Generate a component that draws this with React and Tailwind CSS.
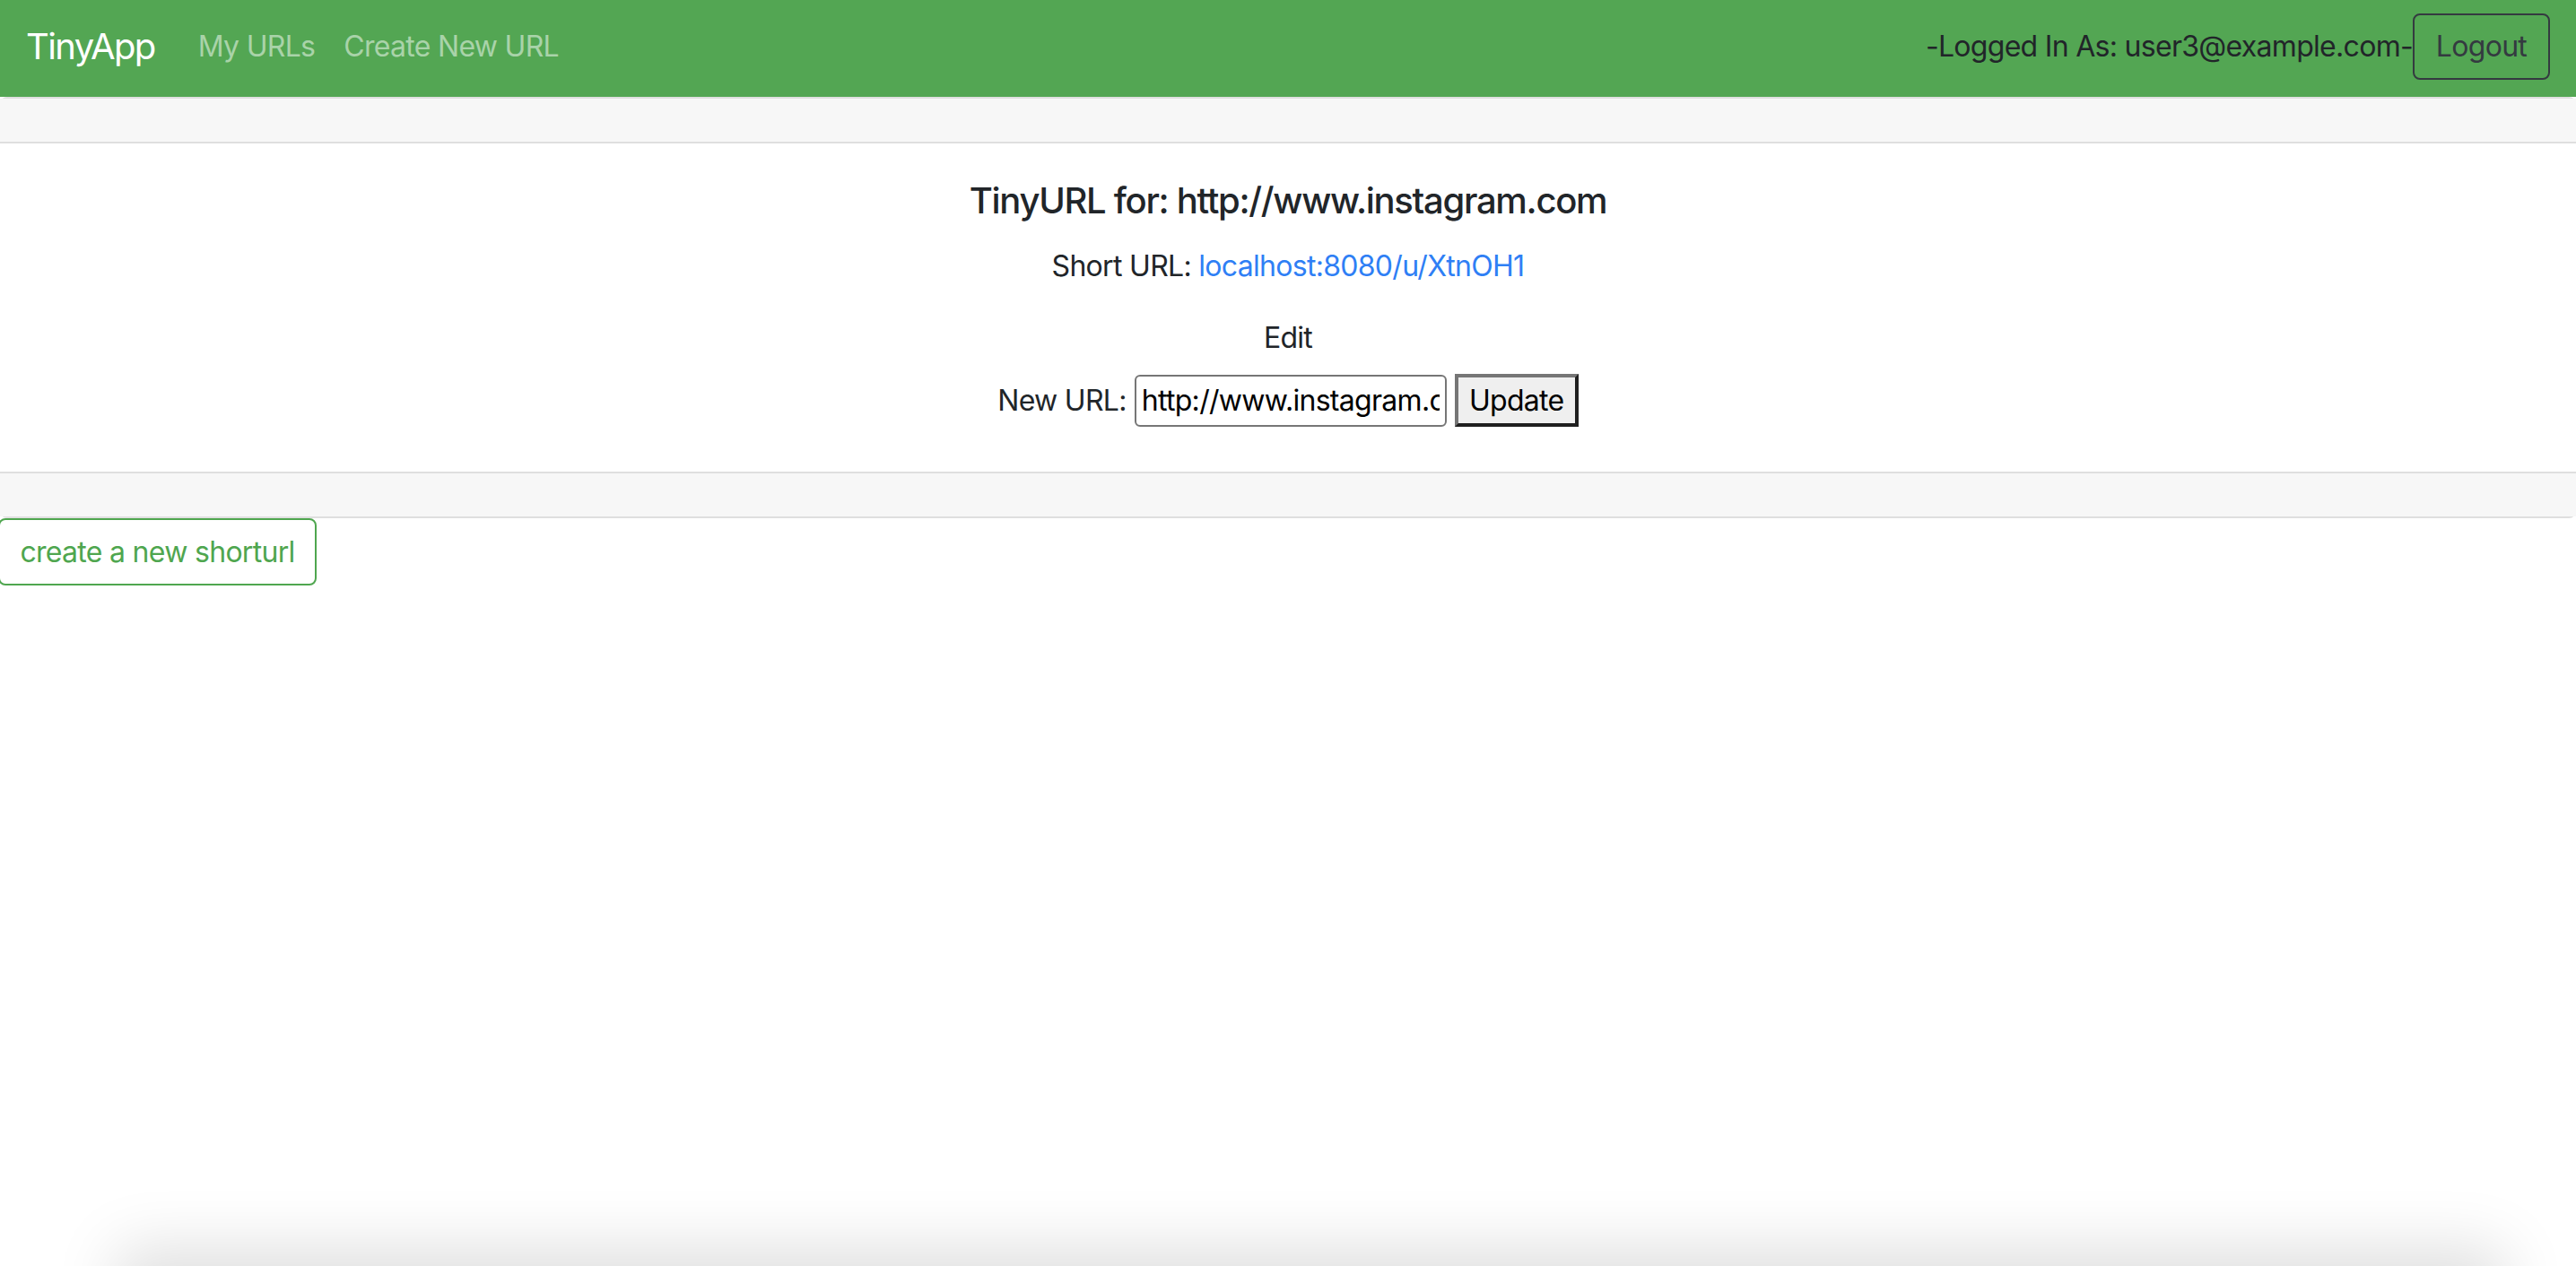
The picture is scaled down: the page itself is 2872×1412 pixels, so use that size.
export default function App() {
  return (
    <div className="min-h-screen bg-white font-['Inter','Liberation_Sans',sans-serif] text-[32px] tracking-[-0.7px] text-[#212529]">
      {/* top nav */}
      <nav className="flex h-[108px] items-center bg-[#53a653] pl-[29px] pr-[29px] pt-[15px] pb-[19px]">
        <a className="mr-[32px] text-[40px] leading-[60px] tracking-[-1.6px] text-white">TinyApp</a>
        <a className="px-[16px] leading-[48px] text-[#a9d3a9]">My URLs</a>
        <a className="px-[16px] leading-[48px] text-[#a9d3a9]">Create New URL</a>
        <div className="ml-auto flex items-center">
          <span className="leading-[48px]">-Logged In As: user3@example.com-</span>
          <button className="flex h-[74px] w-[153px] items-center justify-center rounded-[8px] border-2 border-[#343a40] text-[#343a40]">
            Logout
          </button>
        </div>
      </nav>

      {/* card */}
      <div className="rounded-[8px] border-y-2 border-[#dfdfdf]">
        <div className="h-[50px] border-b-2 border-[#dfdfdf] bg-[#f7f7f7]"></div>
        <div className="flex flex-col items-center pt-[40px] pb-[50px] text-center">
          <h5 className="text-[40px] font-medium leading-[48px] tracking-[-1.3px]">
            TinyURL for: http://www.instagram.com
          </h5>
          <p className="mt-[25px] leading-[48px]">
            Short URL: <a className="text-[#2f7ff5]">localhost:8080/u/XtnOH1</a>
          </p>
          <p className="mt-[32px] leading-[48px]">Edit</p>
          <form className="mt-[16px] flex h-[59px] items-center gap-[9px]">
            <label className="leading-[48px]">New URL:</label>
            <input
              type="text"
              defaultValue="http://www.instagram.com"
              className="h-[58px] w-[348px] rounded-[6px] border-2 border-[#767676] px-[6px] text-[32px] tracking-[-0.7px] text-black outline-none"
            />
            <button
              type="button"
              className="h-[59px] w-[138px] border-[4px] border-t-[#767676] border-l-[#767676] border-r-[#1f1f1f] border-b-[#1f1f1f] bg-[#efefef] text-[32px] text-black"
            >
              Update
            </button>
          </form>
        </div>
        <div className="h-[50px] border-t-2 border-[#dfdfdf] bg-[#f7f7f7]"></div>
      </div>

      <button className="-ml-[2px] flex h-[75px] w-[355px] items-center justify-center rounded-[8px] border-2 border-[#4fa64f] text-[#4fa64f]">
        create a new shorturl
      </button>

      {/* shadow of a window below the screen edge */}
      <div className="fixed left-[150px] right-[100px] top-[1412px] h-[100px] shadow-[0_0_70px_20px_rgba(0,0,0,0.13)]"></div>
    </div>
  );
}
